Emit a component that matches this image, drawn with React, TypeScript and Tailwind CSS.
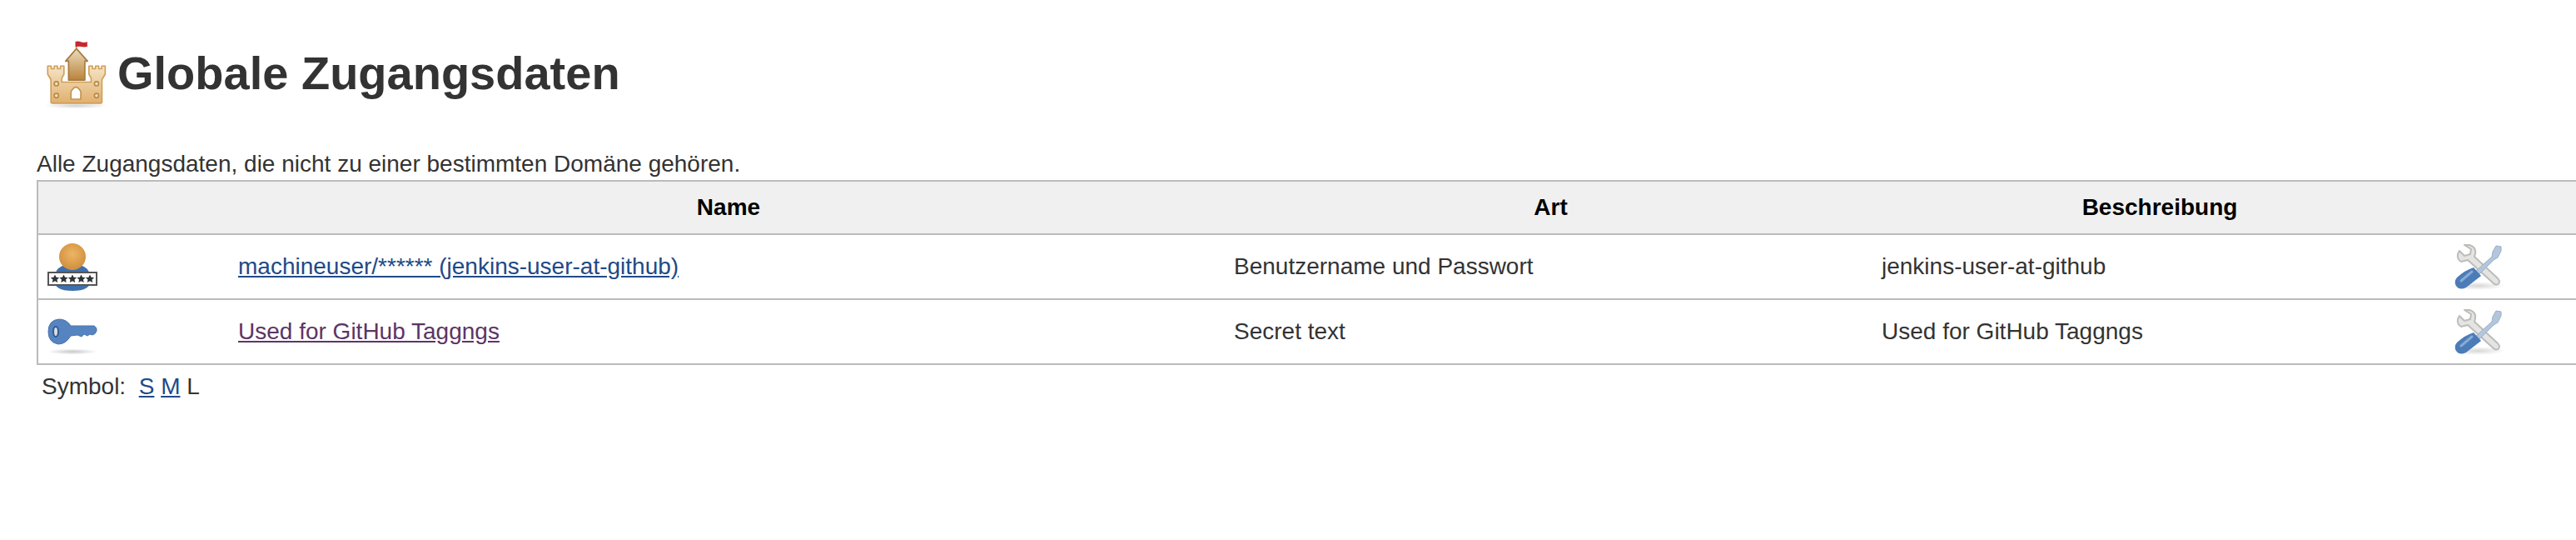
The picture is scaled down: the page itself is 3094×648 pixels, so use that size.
const font = "font-['Liberation_Sans',Arial,sans-serif]";

function CastleIcon() {
  return (
    <svg viewBox="70 50 230 270" className="w-[75px] h-[88px] shrink-0 block">
      <defs>
        <linearGradient id="castleWall" x1="0" y1="0" x2="0" y2="1">
          <stop offset="0" stopColor="#f5e4c6" />
          <stop offset="1" stopColor="#e0b06e" />
        </linearGradient>
        <linearGradient id="castleKeep" x1="0" y1="0" x2="0" y2="1">
          <stop offset="0" stopColor="#ecdcc0" />
          <stop offset="1" stopColor="#b9833a" />
        </linearGradient>
        <radialGradient id="castleShadow">
          <stop offset="0" stopColor="#000" stopOpacity="0.18" />
          <stop offset="1" stopColor="#000" stopOpacity="0" />
        </radialGradient>
      </defs>
      <ellipse cx="185" cy="298" rx="120" ry="11" fill="url(#castleShadow)" />
      <path d="M186 88V66" stroke="#8a6a3a" strokeWidth="3" />
      <path d="M182 62q10-3 20 1t24 0v18q-12 3-22 0t-22 1z" fill="#c8272c" />
      <path d="M186 88 L227 134 L217 134 V204 H157 V134 H146 Z" fill="url(#castleKeep)" stroke="#a87a3c" strokeWidth="5" strokeLinejoin="round" />
      <path d="M80 152h13v10h11v-10h12v10h11v-10h13v30l-8 15v14H240v-14l-8-15v-30h13v10h11v-10h12v10h11v-10h13v30l-12 20V285q0 4-4 4H96q-4 0-4-4V202l-12-20z" fill="url(#castleWall)" stroke="#cf9f58" strokeWidth="5" strokeLinejoin="round" />
      <path d="M166 274v-28q18-32 36 0v28z" fill="#fff" stroke="#c39250" strokeWidth="5" />
      <circle cx="112" cy="217" r="8" fill="#f4e0bc" stroke="#b98a44" strokeWidth="5" />
      <circle cx="112" cy="261" r="8" fill="#f4e0bc" stroke="#b98a44" strokeWidth="5" />
      <circle cx="260" cy="217" r="8" fill="#f4e0bc" stroke="#b98a44" strokeWidth="5" />
      <circle cx="260" cy="261" r="8" fill="#f4e0bc" stroke="#b98a44" strokeWidth="5" />
    </svg>
  );
}

function UserIcon() {
  return (
    <svg viewBox="0 0 62 58" className="w-[62px] h-[58px] block">
      <defs>
        <radialGradient id="userHead" cx="0.5" cy="0.4" r="0.6">
          <stop offset="0" stopColor="#eeb566" />
          <stop offset="1" stopColor="#cf8f3c" />
        </radialGradient>
      </defs>
      <path d="M8 44 Q8 25 30 25 Q52 25 52 44 Q52 57 30 57 Q8 57 8 44z" fill="#3e70ac" />
      <circle cx="30" cy="16" r="16" fill="url(#userHead)" />
      <rect x="1" y="35" width="58" height="15" fill="#fff" stroke="#555" strokeWidth="2" />
      {[9, 19.5, 30, 40.5, 51].map((x) => (
        <path key={x} d={`M${x} 37.5l1.6 3.2 3.6.4-2.7 2.5.7 3.5-3.2-1.8-3.2 1.8.7-3.5-2.7-2.5 3.6-.4z`} fill="#2e3436" />
      ))}
    </svg>
  );
}

function KeyIcon() {
  return (
    <svg viewBox="0 -13 62 58" className="w-[62px] h-[58px] block">
      <defs>
        <radialGradient id="keyShadow">
          <stop offset="0" stopColor="#000" stopOpacity="0.22" />
          <stop offset="1" stopColor="#000" stopOpacity="0" />
        </radialGradient>
      </defs>
      <ellipse cx="30" cy="39" rx="30" ry="3.5" fill="url(#keyShadow)" />
      <path d="M1 15 Q1 1 14 0 Q23 0 28 8 L56 8 Q60 10 59 14 Q58 18 54 19 L51 18 L48 20 L44 18 L41 21 L36 19 L28 20 Q22 30 13 30 Q1 28 1 15z" fill="#5584c0" stroke="#4a76b0" strokeWidth="1" />
      <ellipse cx="10" cy="15" rx="3" ry="6" fill="#d9dde2" stroke="#2f5a94" strokeWidth="2" />
    </svg>
  );
}

function ToolsIcon({ id }: { id: string }) {
  return (
    <svg viewBox="0 0 65 56" className="w-[65px] h-[56px] block">
      <defs>
        <radialGradient id={id}>
          <stop offset="0" stopColor="#000" stopOpacity="0.16" />
          <stop offset="1" stopColor="#000" stopOpacity="0" />
        </radialGradient>
      </defs>
      <ellipse cx="32" cy="50" rx="33" ry="5" fill={`url(#${id})`} />
      <path d="M8 12 Q7 18 12 21 L20 19 L52 48 Q58 50 58 44 L56 41 L28 15 Q32 4 22 1 L16 1 L24 6 L23 12 L16 14 L10 8z" fill="#e4e4e2" stroke="#bcbcba" strokeWidth="2" strokeLinejoin="round" />
      <path d="M60 3 L54 2 L50 9 L49 15 L29 33 L33 37 L51 19 L56 16 L60 8z" fill="#b3c6dc" stroke="#98aec8" strokeWidth="1" strokeLinejoin="round" />
      <path d="M27 28 L36 38 L18 52 Q10 56 6 50 Q3 45 7 40 Q17 31 27 28z" fill="#4b7cb8" />
      <path d="M12 44 L25 33" stroke="#86abd6" strokeWidth="3" strokeLinecap="round" />
    </svg>
  );
}

const rows = [
  { name: "machineuser/****** (jenkins-user-at-github)", kind: "Benutzername und Passwort", desc: "jenkins-user-at-github", color: "text-[#204a87]", icon: <UserIcon /> },
  { name: "Used for GitHub Taggngs", kind: "Secret text", desc: "Used for GitHub Taggngs", color: "text-[#5c3566]", icon: <KeyIcon /> },
];

export default function App() {
  return (
    <div className={`${font} w-[3094px] h-[648px] overflow-hidden bg-white text-[#333] text-[28px] leading-[36px] pl-[44px]`}>
      <h1 className="flex items-start gap-[12px] pt-[46px] pl-[10px] h-[179px] text-[#333] font-bold text-[56px] leading-[64px]">
        <CastleIcon />
        <span className="mt-[10px]">Globale Zugangsdaten</span>
      </h1>
      <div className="h-[37px]">Alle Zugangsdaten, die nicht zu einer bestimmten Domäne gehören.</div>
      <table className="table-fixed border-collapse w-[3060px] border-2 border-[#bbb]">
        <colgroup>
          <col className="w-[231px]" />
          <col className="w-[1198px]" />
          <col className="w-[777px]" />
          <col className="w-[686px]" />
          <col />
        </colgroup>
        <thead>
          <tr className="bg-[#f0f0f0] h-[64px] border-b-2 border-[#bbb] text-black font-bold">
            <th />
            <th className="font-bold">Name</th>
            <th className="font-bold">Art</th>
            <th className="font-bold">Beschreibung</th>
            <th />
          </tr>
        </thead>
        <tbody>
          {rows.map((r, i) => (
            <tr key={r.name} className="h-[78px] border-b-2 border-[#bbb]">
              <td className="pl-[11px] pt-[10px] align-top">{r.icon}</td>
              <td className="pl-[10px]"><a href="#" className={`underline ${r.color}`}>{r.name}</a></td>
              <td className="pl-[8px]">{r.kind}</td>
              <td className="pl-[9px]">{r.desc}</td>
              <td className="pl-[7px] pt-[11px] align-top"><ToolsIcon id={`toolShadow${i}`} /></td>
            </tr>
          ))}
        </tbody>
      </table>
      <div className="pl-[6px] pt-[8px]">
        Symbol:&nbsp; <a href="#" className="underline text-[#204a87]">S</a> <a href="#" className="underline text-[#204a87]">M</a> L
      </div>
    </div>
  );
}
